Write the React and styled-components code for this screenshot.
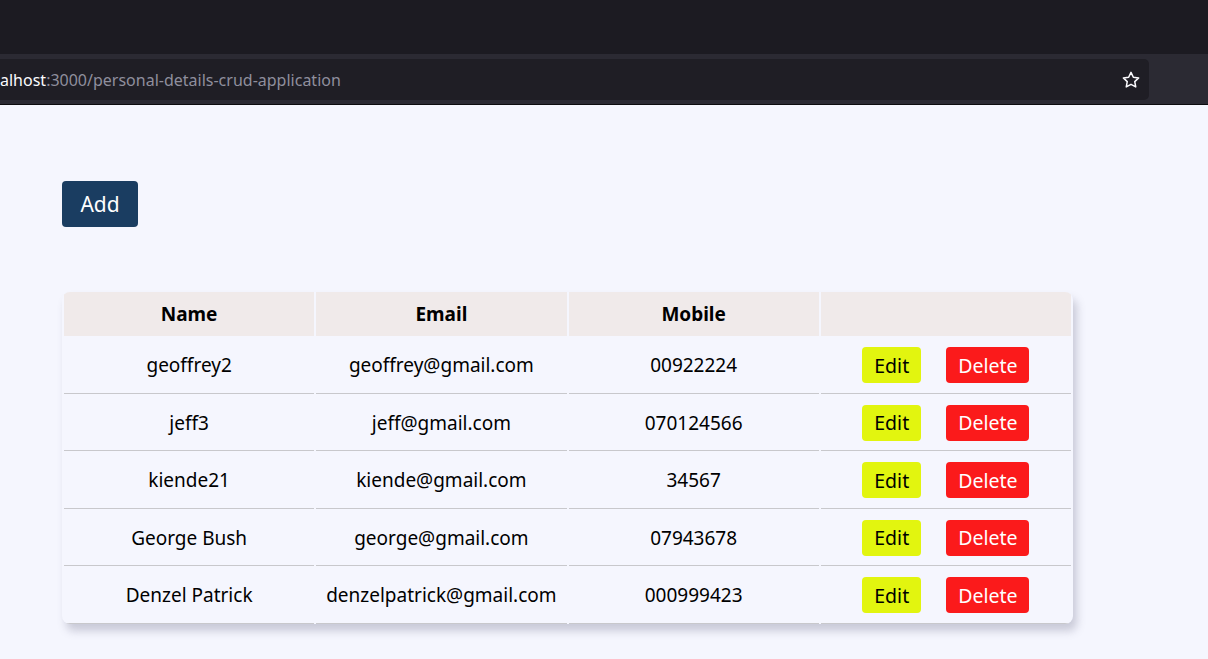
import styled, { createGlobalStyle } from 'styled-components';

const GlobalStyle = createGlobalStyle`
  body {
    margin: 0;
    background: #f5f6fe;
    font-family: 'Noto Sans', 'Open Sans', sans-serif;
  }
`;

const people = [
  { id: 1, name: 'geoffrey2', email: 'geoffrey@gmail.com', mobile: '00922224' },
  { id: 2, name: 'jeff3', email: 'jeff@gmail.com', mobile: '070124566' },
  { id: 3, name: 'kiende21', email: 'kiende@gmail.com', mobile: '34567' },
  { id: 4, name: 'George Bush', email: 'george@gmail.com', mobile: '07943678' },
  { id: 5, name: 'Denzel Patrick', email: 'denzelpatrick@gmail.com', mobile: '000999423' },
];

const Chrome = styled.div`
  background: #1c1b22;
  height: 105px;
  display: flex;
  flex-direction: column;
  justify-content: flex-end;
  border-bottom: 1px solid #0c0c0f;
  box-sizing: border-box;
`;

const Toolbar = styled.div`
  background: #2b2a33;
  height: 50px;
  padding: 5px 59px 4px 0;
  box-sizing: border-box;
  display: flex;
`;

const UrlField = styled.div`
  flex: 1;
  background: #1f1e25;
  border-radius: 0 5px 5px 0;
  display: flex;
  align-items: center;
  justify-content: space-between;
  padding: 0 8px 0 0;
  font-family: 'Noto Sans', sans-serif;
  font-size: 16px;
  color: #8f8f9d;
`;

const Host = styled.span`
  color: #fbfbfe;
`;

const Page = styled.main`
  padding: 76px 62px 40px;
`;

const AddButton = styled.button`
  background: #1a3d61;
  color: #fff;
  border: none;
  border-radius: 4px;
  width: 76px;
  height: 46px;
  font-family: inherit;
  font-size: 21px;
  cursor: pointer;
`;

const Table = styled.table`
  margin-top: 65px;
  width: 1011px;
  table-layout: fixed;
  border-spacing: 2px 0;
  border-radius: 8px;
  box-shadow: 4px 7px 9px rgba(90, 90, 120, 0.28);
  font-size: 19px;
  color: #000;
  overflow: hidden;

  th {
    background: #f0eaea;
    height: 44px;
    padding: 0;
    font-weight: 700;
    font-size: 19px;
  }

  td {
    text-align: center;
    height: 54.5px;
    border-bottom: 1px solid #c8c8cc;
    padding: 2px 0 0;
  }
`;

const Actions = styled.div`
  display: flex;
  justify-content: center;
  gap: 25px;
`;

const ActionButton = styled.button`
  background: ${(p) => (p.$danger ? '#fb1a1b' : '#e2f50f')};
  color: ${(p) => (p.$danger ? '#fff' : '#000')};
  border: none;
  border-radius: 4px;
  height: 36px;
  padding: 0 12px;
  font-family: inherit;
  font-size: 19.5px;
  cursor: pointer;
`;

const Star = () => (
  <svg width="20" height="20" viewBox="0 0 24 24" fill="none" stroke="#fbfbfe" strokeWidth="1.8" strokeLinejoin="round">
    <path d="M12 2.8l2.8 5.9 6.4.8-4.7 4.4 1.2 6.4L12 17.2l-5.7 3.1 1.2-6.4-4.7-4.4 6.4-.8z" />
  </svg>
);

export default function App() {
  return (
    <>
      <GlobalStyle />
      <Chrome>
        <Toolbar>
          <UrlField>
            <span>
              <Host>alhost</Host>:3000/personal-details-crud-application
            </span>
            <Star />
          </UrlField>
        </Toolbar>
      </Chrome>
      <Page>
        <AddButton>Add</AddButton>
        <Table>
          <thead>
            <tr>
              <th>Name</th>
              <th>Email</th>
              <th>Mobile</th>
              <th></th>
            </tr>
          </thead>
          <tbody>
            {people.map((p) => (
              <tr key={p.id}>
                <td>{p.name}</td>
                <td>{p.email}</td>
                <td>{p.mobile}</td>
                <td>
                  <Actions>
                    <ActionButton>Edit</ActionButton>
                    <ActionButton $danger>Delete</ActionButton>
                  </Actions>
                </td>
              </tr>
            ))}
          </tbody>
        </Table>
      </Page>
    </>
  );
}
